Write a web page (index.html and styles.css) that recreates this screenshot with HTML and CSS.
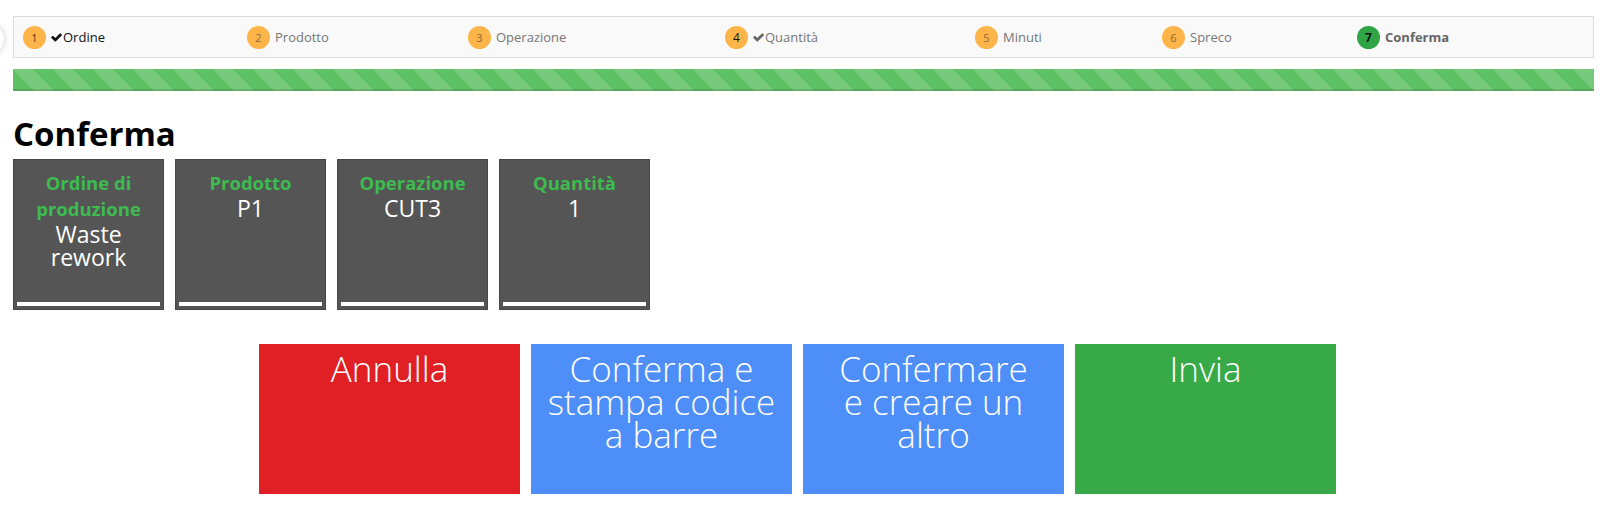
FILE: index.html
```html
<!DOCTYPE html>
<html lang="it">
<head>
<meta charset="utf-8">
<title>Conferma</title>
<link rel="stylesheet" href="styles.css">
</head>
<body>
<div class="side-toggle"></div>
<div class="page">
  <div class="stepper">
    <div class="step done"><span class="num">1</span><span class="label"><svg class="check" viewBox="90 330 1590 1200"><path d="M1671 566q0 40-28 68l-724 724-136 136q-28 28-68 28t-68-28l-136-136-362-362q-28-28-28-68t28-68l136-136q28-28 68-28t68 28l294 295 656-657q28-28 68-28t68 28l136 136q28 28 28 68z"/></svg>Ordine</span></div>
    <div class="step"><span class="num">2</span><span class="label">Prodotto</span></div>
    <div class="step"><span class="num">3</span><span class="label">Operazione</span></div>
    <div class="step checked"><span class="num">4</span><span class="label"><svg class="check" viewBox="90 330 1590 1200"><path d="M1671 566q0 40-28 68l-724 724-136 136q-28 28-68 28t-68-28l-136-136-362-362q-28-28-28-68t28-68l136-136q28-28 68-28t68 28l294 295 656-657q28-28 68-28t68 28l136 136q28 28 28 68z"/></svg>Quantità</span></div>
    <div class="step"><span class="num">5</span><span class="label">Minuti</span></div>
    <div class="step"><span class="num">6</span><span class="label">Spreco</span></div>
    <div class="step current"><span class="num">7</span><span class="label">Conferma</span></div>
  </div>
  <div class="progress"><div class="progress-bar"></div></div>
  <h1 class="title">Conferma</h1>
  <div class="cards">
    <div class="card"><div class="card-title">Ordine di produzione</div><div class="card-value">Waste rework</div><div class="card-bar"></div></div>
    <div class="card"><div class="card-title">Prodotto</div><div class="card-value">P1</div><div class="card-bar"></div></div>
    <div class="card"><div class="card-title">Operazione</div><div class="card-value">CUT3</div><div class="card-bar"></div></div>
    <div class="card"><div class="card-title">Quantità</div><div class="card-value">1</div><div class="card-bar"></div></div>
  </div>
  <div class="actions">
    <div class="btn btn-red">Annulla</div>
    <div class="btn btn-blue">Conferma e stampa codice a barre</div>
    <div class="btn btn-blue">Confermare<br>e creare un altro</div>
    <div class="btn btn-green">Invia</div>
  </div>
</div>
</body>
</html>
```
FILE: styles.css
```css
html, body {
  margin: 0;
  padding: 0;
  background: #fff;
  font-family: "Open Sans", "Liberation Sans", sans-serif;
  color: #333;
}
.side-toggle {
  position: fixed;
  left: -28px;
  top: 23px;
  width: 32px;
  height: 32px;
  border-radius: 50%;
  background: #fff;
  box-shadow: 0 0 6px rgba(0,0,0,0.22);
}
.page {
  padding: 16px 10px 0 13px;
}
.stepper {
  display: grid;
  grid-template-columns: 224px 221px 257px 250px 187px 195px 1fr;
  align-items: center;
  height: 40px;
  padding: 0 9px 0 9px;
  border: 1px solid #dcdcdc;
  background: #f9f9f9;
  font-size: 13px;
}
.step {
  display: flex;
  align-items: center;
  gap: 5px;
  color: #777;
}
.label {
  display: flex;
  align-items: center;
}
.num {
  width: 23px;
  height: 23px;
  border-radius: 50%;
  background: #fdb54a;
  color: #8a6a3a;
  font-size: 11px;
  display: flex;
  align-items: center;
  justify-content: center;
  flex: none;
}
.check {
  width: 11px;
  height: 9px;
  margin-right: 1px;
  fill: #666;
}
.step.done .num { color: #4a3418; }
.step.done .label { color: #111; }
.step.done .check { fill: #111; }
.step.checked .num { color: #111; font-size: 12px; }
.step.current .num { background: #2fa545; color: #111; font-weight: 700; font-size: 12px; }
.step.current .label { color: #666; font-weight: 700; }
.progress {
  margin-top: 11px;
  height: 22px;
  background: #f5f5f5;
}
.progress-bar {
  height: 100%;
  width: 100%;
  background-color: #5fc165;
  background-image: linear-gradient(45deg, rgba(255,255,255,0.15) 25%, transparent 25%, transparent 50%, rgba(255,255,255,0.15) 50%, rgba(255,255,255,0.15) 75%, transparent 75%, transparent);
  background-size: 40px 40px;
  box-shadow: inset 0 -2px 0 rgba(0,0,0,0.12);
}
.title {
  margin: 23px 0 0;
  height: 45px;
  font-size: 33px;
  line-height: 40px;
  font-weight: 700;
  color: #000;
}
.cards {
  display: flex;
  gap: 11px;
}
.card {
  width: 151px;
  height: 151px;
  box-sizing: border-box;
  background: #555;
  border: 1px solid #474747;
  display: flex;
  flex-direction: column;
  align-items: center;
  text-align: center;
  padding: 10px 3px 3px;
}
.card-title {
  color: #3dbb4f;
  font-weight: 700;
  font-size: 18.5px;
  line-height: 26px;
}
.card-value {
  color: #fff;
  font-size: 23px;
  line-height: 23px;
  margin-top: 1px;
}
.card-bar {
  margin-top: auto;
  width: 100%;
  height: 4px;
  background: #fff;
}
.actions {
  display: flex;
  gap: 11px;
  margin-top: 34px;
  padding-left: 246px;
}
.btn {
  width: 261px;
  height: 150px;
  box-sizing: border-box;
  padding: 8px 10px 0;
  color: #fff;
  font-size: 35px;
  font-weight: 300;
  line-height: 33px;
  text-align: center;
}
.btn-red { background: #e02024; }
.btn-blue { background: #4d8ef8; }
.btn-green { background: #37a947; }
```
